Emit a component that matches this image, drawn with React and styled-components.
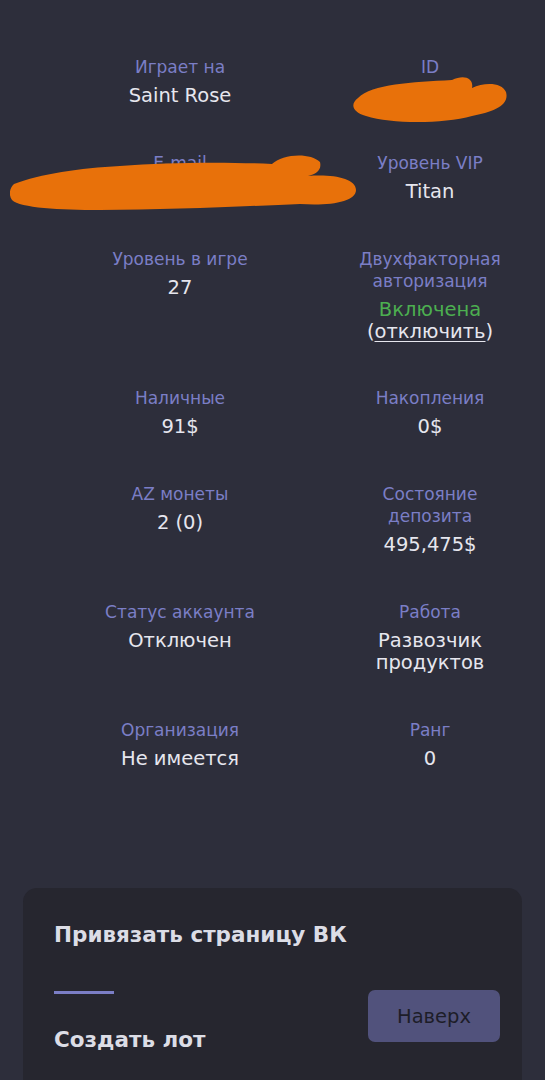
import styled, { createGlobalStyle } from 'styled-components'

const GlobalStyle = createGlobalStyle`
  html, body {
    margin: 0;
    padding: 0;
    background: #2d2e3b;
  }
  body {
    font-family: 'DejaVu Sans', 'Noto Sans', sans-serif;
    width: 545px;
    height: 1080px;
    overflow: hidden;
  }
`

const Page = styled.div`
  position: relative;
  width: 545px;
  height: 1080px;
  overflow: hidden;
  background: #2d2e3b;
`

const InfoGrid = styled.div`
  display: grid;
  grid-template-columns: 230px 230px;
  column-gap: 20px;
  row-gap: 45px;
  padding: 56px 0 0 65px;
`

const Cell = styled.div`
  position: relative;
  display: flex;
  flex-direction: column;
  align-items: center;
  text-align: center;
`

const Label = styled.div`
  max-width: 180px;
  color: #7b7ec6;
  font-size: 17px;
  line-height: 22px;
`

const Value = styled.div`
  max-width: 150px;
  margin-top: 7px;
  color: ${(p) => p.$color || '#e6e6ee'};
  font-size: 19.5px;
  line-height: 22px;
`

const Link = styled.div`
  color: #e6e6ee;
  font-size: 19.5px;
  line-height: 21px;
  a {
    color: inherit;
    text-decoration: underline;
    text-underline-offset: 3px;
  }
`

const Blob = styled.svg`
  position: absolute;
  left: ${(p) => p.$left}px;
  top: ${(p) => p.$top}px;
`

const Card = styled.div`
  margin: 118px 23px 0 23px;
  background: #26262f;
  border-radius: 14px;
  padding: 35px 31px 60px;
  display: flex;
  flex-direction: column;
`

const CardTitle = styled.div`
  color: #dcdde6;
  font-size: 21.5px;
  font-weight: 700;
  line-height: 24px;
`

const Divider = styled.div`
  width: 60px;
  height: 3px;
  background: #7b7ec6;
  margin: 44px 0 34px;
`

const UpButton = styled.button`
  position: absolute;
  left: 368px;
  top: 990px;
  width: 132px;
  height: 52px;
  border: none;
  border-radius: 7px;
  background: #51527c;
  color: #1d1d28;
  font-family: inherit;
  font-size: 19.5px;
`

const rows = [
  { label: 'Играет на', value: 'Saint Rose' },
  { label: 'ID', value: '\u00a0', blob: 'id' },
  { label: 'E-mail', value: '\u00a0', blob: 'mail' },
  { label: 'Уровень VIP', value: 'Titan' },
  { label: 'Уровень в игре', value: '27' },
  { label: 'Двухфакторная авторизация', value: 'Включена', twofa: true },
  { label: 'Наличные', value: '91$' },
  { label: 'Накопления', value: '0$' },
  { label: 'AZ монеты', value: '2 (0)' },
  { label: 'Состояние депозита', value: '495,475$' },
  { label: 'Статус аккаунта', value: 'Отключен' },
  { label: 'Работа', value: 'Развозчик продуктов' },
  { label: 'Организация', value: 'Не имеется' },
  { label: 'Ранг', value: '0' },
]

function IdBlob() {
  return (
    <Blob $left={37} $top={18} width="156" height="50" viewBox="0 0 156 50">
      <path
        d="M6 24 C 20 10, 60 8, 100 6 C 112 0, 122 4, 120 14 C 132 8, 150 8, 154 18 C 158 32, 140 38, 120 42 C 90 50, 40 50, 14 42 C 0 38, -2 30, 6 24 Z"
        fill="#e8710a"
      />
    </Blob>
  )
}

function MailBlob() {
  return (
    <Blob $left={-55} $top={0} width="348" height="60" viewBox="0 0 348 60">
      <path
        d="M4 32 C 30 22, 70 16, 110 14 C 160 10, 220 10, 262 12 C 272 2, 300 0, 310 10 C 312 18, 306 22, 298 24 C 322 22, 346 26, 346 38 C 346 50, 320 54, 290 52 C 240 54, 160 58, 90 58 C 50 58, 10 56, 2 48 C -2 42, 0 36, 4 32 Z"
        fill="#e8710a"
      />
    </Blob>
  )
}

function App() {
  return (
    <Page>
      <GlobalStyle />
      <InfoGrid>
        {rows.map((row, index) => (
          <Cell key={index}>
            <Label>{row.label}</Label>
            <Value $color={row.twofa ? '#4caf50' : undefined}>{row.value}</Value>
            {row.twofa && (
              <Link>
                (<a>отключить</a>)
              </Link>
            )}
            {row.blob === 'id' && <IdBlob />}
            {row.blob === 'mail' && <MailBlob />}
          </Cell>
        ))}
      </InfoGrid>
      <Card>
        <CardTitle>Привязать страницу ВК</CardTitle>
        <Divider />
        <CardTitle>Создать лот</CardTitle>
      </Card>
      <UpButton>Наверх</UpButton>
    </Page>
  )
}

export default App
